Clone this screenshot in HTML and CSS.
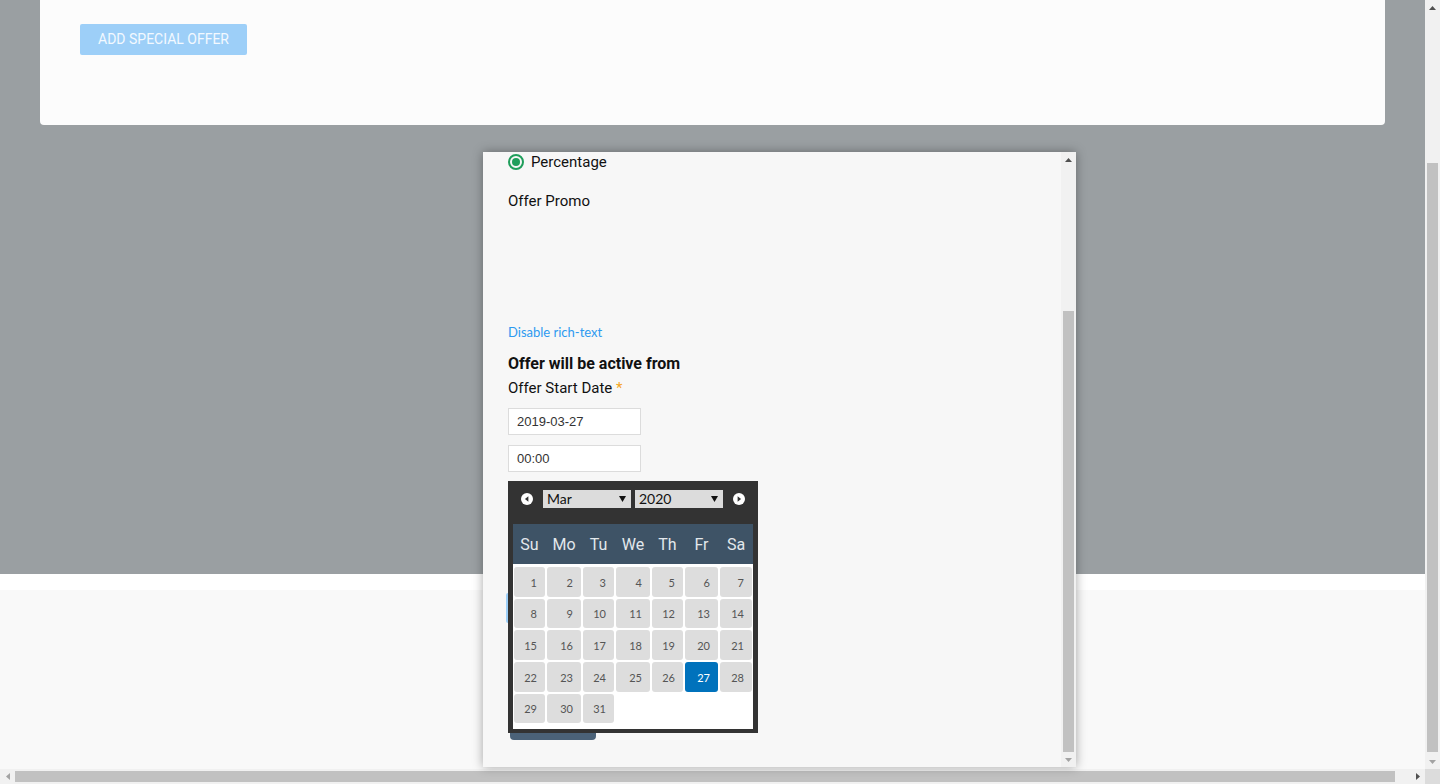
FILE: index.html
```html
<!DOCTYPE html>
<html lang="en">
<head>
<meta charset="utf-8">
<title>Special offers</title>
<link rel="stylesheet" href="styles.css">
</head>
<body>
<div class="frame">
  <div class="viewport">
    <div class="doc">
      <section class="top-area">
        <div class="card">
          <button class="btn-add" type="button">ADD SPECIAL OFFER</button>
        </div>
      </section>
      <div class="strip"></div>
      <div class="rest"></div>
    </div>
  </div>

  <div class="vbar page-vbar">
    <div class="sb-btn"><svg width="7" height="4" viewBox="0 0 7 4"><path d="M0 4L3.5 0L7 4Z" fill="#505050"/></svg></div>
    <div class="sb-track"><div class="sb-thumb page-vthumb"></div></div>
    <div class="sb-btn"><svg width="7" height="4" viewBox="0 0 7 4"><path d="M0 0H7L3.5 4Z" fill="#a3a3a3"/></svg></div>
  </div>
  <div class="hbar">
    <div class="sb-btn"><svg width="4" height="7" viewBox="0 0 4 7"><path d="M4 0V7L0 3.5Z" fill="#a3a3a3"/></svg></div>
    <div class="sb-track"><div class="sb-thumb page-hthumb"></div></div>
    <div class="sb-btn"><svg width="4" height="7" viewBox="0 0 4 7"><path d="M0 0V7L4 3.5Z" fill="#505050"/></svg></div>
  </div>
  <div class="corner"></div>

  <div class="modal">
    <div class="modal-view">
      <div class="modal-body">
        <h3 class="sec-title">Special offer details</h3>
        <div class="field-label">Offer Title <span class="req">*</span></div>
        <div class="input"></div>
        <div class="field-label">Discount Type</div>
        <div class="radio-row gap-lg"><span class="radio"></span><span>Fixed amount</span></div>
        <div class="radio-row"><span class="radio is-checked"></span><span>Percentage</span></div>
        <div class="field-label promo">Offer Promo</div>
        <div class="editor"></div>
        <a class="link">Disable rich-text</a>
        <h4 class="h-active">Offer will be active from</h4>
        <div class="field-label2">Offer Start Date <span class="req">*</span></div>
        <div class="input date">2019-03-27</div>
        <div class="input time">00:00</div>
        <h4 class="h-expire">Offer will expire on</h4>
        <div class="field-label2">Offer End Date</div>
        <button class="btn-light" type="button">SET END DATE</button>
        <button class="btn-save" type="button">SAVE</button>

        <div class="datepicker">
          <div class="dp-nav">
            <svg class="dp-arrow" width="12" height="12" viewBox="0 0 12 12"><circle cx="6" cy="6" r="6" fill="#fff"/><path d="M7.4 3.3L3.9 6L7.4 8.7Z" fill="#333"/></svg>
            <div class="dp-select"><span>Mar</span><svg width="7" height="6" viewBox="0 0 7 6"><path d="M0 0H7L3.5 6Z" fill="#111"/></svg></div>
            <div class="dp-select"><span>2020</span><svg width="7" height="6" viewBox="0 0 7 6"><path d="M0 0H7L3.5 6Z" fill="#111"/></svg></div>
            <svg class="dp-arrow" width="12" height="12" viewBox="0 0 12 12"><circle cx="6" cy="6" r="6" fill="#fff"/><path d="M4.6 3.3L8.1 6L4.6 8.7Z" fill="#333"/></svg>
          </div>
          <div class="dp-head">
            <span>Su</span><span>Mo</span><span>Tu</span><span>We</span><span>Th</span><span>Fr</span><span>Sa</span>
          </div>
          <div class="dp-body">
            <div class="day">1</div><div class="day">2</div><div class="day">3</div><div class="day">4</div><div class="day">5</div><div class="day">6</div><div class="day">7</div>
            <div class="day">8</div><div class="day">9</div><div class="day">10</div><div class="day">11</div><div class="day">12</div><div class="day">13</div><div class="day">14</div>
            <div class="day">15</div><div class="day">16</div><div class="day">17</div><div class="day">18</div><div class="day">19</div><div class="day">20</div><div class="day">21</div>
            <div class="day">22</div><div class="day">23</div><div class="day">24</div><div class="day">25</div><div class="day">26</div><div class="day is-selected">27</div><div class="day">28</div>
            <div class="day">29</div><div class="day">30</div><div class="day">31</div>
          </div>
        </div>
      </div>
    </div>
    <div class="vbar modal-vbar">
      <div class="sb-btn"><svg width="7" height="4" viewBox="0 0 7 4"><path d="M0 4L3.5 0L7 4Z" fill="#505050"/></svg></div>
      <div class="sb-track"><div class="sb-thumb modal-vthumb"></div></div>
      <div class="sb-btn"><svg width="7" height="4" viewBox="0 0 7 4"><path d="M0 0H7L3.5 4Z" fill="#a3a3a3"/></svg></div>
    </div>
  </div>
</div>
</body>
</html>
```

FILE: styles.css
```css
* { box-sizing: border-box; }
html, body { margin: 0; padding: 0; }
body {
  overflow: hidden;
  font-family: Roboto, "Noto Sans", sans-serif;
  color: #111;
}
.frame {
  position: relative;
  width: 1440px;
  height: 784px;
  display: grid;
  grid-template-columns: 1425px 15px;
  grid-template-rows: 769px 15px;
}

/* page viewport, showing the end of the document */
.viewport {
  overflow: hidden;
  display: flex;
  flex-direction: column-reverse;
}
.doc {
  flex: none;
  width: 1441px;
  height: 966px;
  display: flex;
  flex-direction: column;
  background: #f9f9f9;
}
.top-area { flex: none; height: 771px; background: #9a9fa2; }
.card {
  width: 1345px;
  height: 322px;
  margin-left: 40px;
  padding: 221px 40px 0;
  background: #fcfcfc;
  border-radius: 0 0 4px 4px;
}
.btn-add {
  display: block;
  width: 167px;
  height: 31px;
  padding: 0;
  border: 0;
  border-radius: 2px;
  background: #9dcff8;
  color: #f3f9ff;
  font: 400 14px/31px Roboto, sans-serif;
  text-align: center;
}
.strip { flex: none; height: 16px; background: #fff; }
.rest { flex: 1; }

/* scrollbars */
.vbar, .hbar {
  display: flex;
  background: #f1f1f1;
}
.vbar { flex-direction: column; width: 15px; }
.hbar { flex-direction: row; height: 15px; }
.sb-btn {
  flex: none;
  width: 15px;
  height: 15px;
  display: flex;
  align-items: center;
  justify-content: center;
}
.sb-track { flex: 1; display: flex; }
.vbar .sb-track { flex-direction: column; }
.sb-thumb { flex: none; background: #c1c1c1; }
.page-vthumb { margin: 148px 2px 0; height: 589px; }
.page-hthumb { margin: 2px 0; width: 1380px; }
.corner { background: #dcdcdc; }

/* modal */
.modal {
  position: absolute;
  left: 483px;
  top: 152px;
  width: 593px;
  height: 615px;
  background: #f7f7f7;
  box-shadow: 0 0 10px rgba(0, 0, 0, 0.35);
  display: flex;
}
.modal-view {
  flex: 1;
  overflow: hidden;
  display: flex;
  flex-direction: column-reverse;
}
.modal-vbar { height: 615px; }
.modal-vthumb { margin: 144px 2px 0; height: 441px; }
.modal-body {
  flex: none;
  position: relative;
  display: flex;
  flex-direction: column;
  align-items: flex-start;
  padding: 24px 25px 27px;
}
.sec-title { margin: 0 0 8px; font: 700 16px/24px Roboto, sans-serif; }
.field-label { margin-bottom: 8px; font: 400 15px/24px Roboto, sans-serif; color: #111; }
.field-label.promo { margin: 17px 0 0; }
.req { color: #f5a623; }
.input {
  width: 133px;
  height: 27px;
  padding-left: 8px;
  background: #fff;
  border: 1px solid #dcdcdc;
  font: 13px/25px "Liberation Sans", Arial, sans-serif;
  color: #333;
  margin-bottom: 14px;
}
.input.date { margin: 9px 0 0; }
.input.time { margin: 10px 0 0; }
.radio-row {
  display: flex;
  align-items: center;
  gap: 7px;
  height: 20px;
  font: 400 15px/20px Roboto, sans-serif;
}
.radio-row.gap-lg { margin-bottom: 20px; }
.radio {
  width: 16px;
  height: 16px;
  border: 2px solid #8a8a8a;
  border-radius: 50%;
  display: flex;
  align-items: center;
  justify-content: center;
}
.radio.is-checked { border-color: #1f9e5b; }
.radio.is-checked::after {
  content: "";
  width: 8px;
  height: 8px;
  border-radius: 50%;
  background: #1f9e5b;
}
.editor { width: 100%; height: 110px; }
.link { font: 400 13px/18px Lato, sans-serif; color: #2d9af0; cursor: pointer; }
.h-active { margin: 12px 0 0; font: 700 16px/22px Roboto, sans-serif; }
.field-label2 { margin-top: 2px; font: 400 15px/22px Roboto, sans-serif; }
.h-expire { margin: 11px 0 0; font: 700 16px/22px Roboto, sans-serif; }
.btn-light {
  margin: 64px 0 0 -2px;
  width: 120px;
  height: 30px;
  border: 0;
  border-radius: 2px;
  background: #9dcff8;
  color: #fff;
  font: 14px Roboto, sans-serif;
}
.btn-save {
  margin: 83px 0 0 2px;
  width: 86px;
  height: 34px;
  border: 0;
  border-radius: 4px;
  background: #4b6278;
  color: #fff;
  font: 14px Roboto, sans-serif;
}

/* datepicker */
.datepicker {
  position: absolute;
  top: 530px;
  left: 25px;
  width: 250px;
  padding: 0 5px 4px;
  background: #333;
}
.dp-nav {
  height: 43px;
  display: flex;
  align-items: flex-start;
  padding: 9px 0 0 8px;
}
.dp-arrow { margin-top: 3px; flex: none; }
.dp-select {
  width: 88px;
  height: 18px;
  margin-left: 10px;
  display: flex;
  align-items: center;
  justify-content: space-between;
  padding: 0 5px 0 4px;
  background: #dcdcdc;
  font: 400 14px/18px Lato, sans-serif;
  color: #111;
}
.dp-select + .dp-select { margin-left: 4px; }
.dp-select + .dp-arrow { margin-left: 10px; }
.dp-head, .dp-body {
  display: grid;
  grid-template-columns: 31px 34px 31px 34px 31px 33px 32px;
  column-gap: 2px;
  padding: 0 1px;
}
.dp-head {
  height: 40px;
  padding-top: 1px;
  align-items: center;
  justify-items: center;
  background: #3e5366;
  color: #e3e8ec;
  font: 400 16px/20px Roboto, sans-serif;
}
.dp-body {
  background: #fff;
  padding: 3px 1px 6px;
  grid-template-rows: 30px 29px 30px 30px 29px;
  row-gap: 2px;
}
.day {
  background: #dddddd;
  border-radius: 3px;
  padding-right: 8px;
  font: 400 11px/29px Lato, sans-serif;
  color: #555;
  display: flex;
  align-items: center;
  justify-content: flex-end;
}
.day.is-selected { background: #0072bc; color: #fff; }
```
